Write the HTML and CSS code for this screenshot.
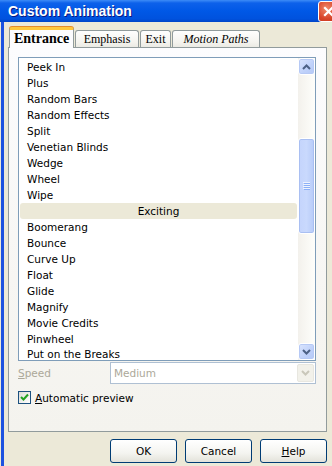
FILE: index.html
```html
<!DOCTYPE html>
<html lang="en">
<head>
  <meta charset="UTF-8">
  <title>Custom Animation</title>
  <link rel="stylesheet" href="styles.css">
</head>
<body>
  <div class="window">
    <div class="titlebar">
      <span class="title">Custom Animation</span>
      <span class="close">
        <svg width="13" height="13" viewBox="0 0 13 13"><path d="M3 3 L10 10 M10 3 L3 10" stroke="#fff" stroke-width="2.2" stroke-linecap="square"/></svg>
      </span>
    </div>

    <div class="client">
      <div class="tabs">
        <div class="tab active">Entrance</div>
        <div class="tab emphasis">Emphasis</div>
        <div class="tab exit">Exit</div>
        <div class="tab motion">Motion Paths</div>
      </div>

      <div class="pane">
        <div class="listbox">
          <div class="items">
            <div class="item">Peek In</div>
            <div class="item">Plus</div>
            <div class="item">Random Bars</div>
            <div class="item">Random Effects</div>
            <div class="item">Split</div>
            <div class="item">Venetian Blinds</div>
            <div class="item">Wedge</div>
            <div class="item">Wheel</div>
            <div class="item">Wipe</div>
            <div class="group">Exciting</div>
            <div class="item">Boomerang</div>
            <div class="item">Bounce</div>
            <div class="item">Curve Up</div>
            <div class="item">Float</div>
            <div class="item">Glide</div>
            <div class="item">Magnify</div>
            <div class="item">Movie Credits</div>
            <div class="item">Pinwheel</div>
            <div class="item last">Put on the Breaks</div>
          </div>
          <div class="scrollbar">
            <div class="sb-btn">
              <svg width="9" height="6" viewBox="0 0 9 6"><path d="M1 5 L4.5 1.5 L8 5" fill="none" stroke="#4d6185" stroke-width="2"/></svg>
            </div>
            <div class="sb-track">
              <div class="thumb">
                <svg width="7" height="8" viewBox="0 0 7 8"><path d="M0 0.5 H7 M0 2.5 H7 M0 4.5 H7 M0 6.5 H7" stroke="#eef3fe" stroke-width="1"/><path d="M1 1.5 H7 M1 3.5 H7 M1 5.5 H7 M1 7.5 H7" stroke="#8cb0f8" stroke-width="1"/></svg>
              </div>
            </div>
            <div class="sb-btn">
              <svg width="9" height="6" viewBox="0 0 9 6"><path d="M1 1 L4.5 4.5 L8 1" fill="none" stroke="#4d6185" stroke-width="2"/></svg>
            </div>
          </div>
        </div>

        <div class="speed-row">
          <span class="speed-label"><u>S</u>peed</span>
          <div class="combo">
            <span class="combo-text">Medium</span>
            <span class="combo-btn">
              <svg width="9" height="6" viewBox="0 0 9 6"><path d="M1 1 L4.5 4.5 L8 1" fill="none" stroke="#c9c7ba" stroke-width="2"/></svg>
            </span>
          </div>
        </div>

        <div class="check-row">
          <span class="checkbox">
            <svg width="11" height="11" viewBox="0 0 11 11"><path d="M2 5 L4.5 7.5 L9 2.5" fill="none" stroke="#21a121" stroke-width="2"/></svg>
          </span>
          <span class="check-label"><u>A</u>utomatic preview</span>
        </div>
      </div>

      <div class="buttons">
        <button class="btn">OK</button>
        <button class="btn">Cancel</button>
        <button class="btn"><u>H</u>elp</button>
      </div>
    </div>
  </div>
</body>
</html>
```

FILE: styles.css
```css
html, body {
  margin: 0;
  width: 332px;
  height: 466px;
  overflow: hidden;
}

body {
  background: #eef0f6;
  font-family: "DejaVu Sans", Tahoma, sans-serif;
  font-size: 10.5px;
  color: #000;
}

.window {
  width: 342px;
  height: 466px;
  background: #ece9d8;
}

.titlebar {
  height: 22px;
  display: flex;
  align-items: center;
  justify-content: space-between;
  background: linear-gradient(#3d8cf7 0, #0d61ea 3px, #0058e6 50%, #0052de 85%, #0045c8 100%);
}

.title {
  margin-left: 8px;
  color: #fff;
  font-family: "Liberation Sans", Arial, sans-serif;
  font-weight: bold;
  font-size: 14px;
  text-shadow: 1px 1px 0 #0a1883;
}

.close {
  width: 19px;
  height: 19px;
  margin-right: 3px;
  display: flex;
  align-items: center;
  justify-content: center;
  border: 1px solid #fff;
  border-radius: 3px;
  background: radial-gradient(circle at 40% 35%, #f08a6c, #d8452a 60%, #c43318);
}

.client {
  height: 444px;
  margin-left: 1px;
  border-left: 3px solid #1c52e0;
  padding: 5px 0 0 4px;
}

/* tabs */
.tabs {
  display: flex;
  align-items: flex-end;
  padding-left: 1px;
  height: 20px;
  font-family: "Liberation Serif", "Times New Roman", serif;
  font-size: 12px;
}

.tab {
  height: 17px;
  margin-left: 1px;
  box-sizing: border-box;
  border: 1px solid #919b9c;
  border-bottom: none;
  border-radius: 3px 3px 0 0;
  background: linear-gradient(#fefefe, #f4f3ee 70%, #ebeae4);
  text-align: center;
  line-height: 17px;
}

.tab.active {
  position: relative;
  z-index: 1;
  height: 21px;
  margin: 0 0 -1px 0;
  width: 65px;
  background: #fcfcfe;
  border-top: 3px solid #ffc83c;
  box-shadow: 0 -1px 0 #e68b2c;
  font-weight: bold;
  font-size: 14px;
  line-height: 17px;
}

.tab.emphasis { width: 64px; }
.tab.exit { width: 31px; }
.tab.motion { width: 88px; font-style: italic; }

/* pane */
.pane {
  width: 319px;
  height: 385px;
  box-sizing: border-box;
  border: 1px solid #919b9c;
  background: linear-gradient(#fcfcfe, #f7f6f3 60%, #f4f3ee);
  padding: 9px 0 0 9px;
}

.listbox {
  width: 298px;
  height: 304px;
  box-sizing: border-box;
  border: 1px solid #7f9db9;
  background: #fff;
  display: flex;
  overflow: hidden;
}

.items {
  width: 279px;
  padding-top: 1px;
  overflow: hidden;
}

.item {
  height: 16px;
  line-height: 16px;
  padding-left: 8px;
  white-space: nowrap;
}

.item.last {
  height: 13px;
  line-height: 14px;
}

.group {
  height: 16px;
  line-height: 16px;
  margin: 0 1px;
  border-radius: 3px;
  background: #ece9d8;
  text-align: center;
}

/* scrollbar */
.scrollbar {
  width: 17px;
  display: flex;
  flex-direction: column;
  background: linear-gradient(90deg, #f3f1ec, #fefefb);
}

.sb-btn {
  height: 17px;
  box-sizing: border-box;
  display: flex;
  align-items: center;
  justify-content: center;
  border: 1px solid #fff;
  border-radius: 3px;
  background: linear-gradient(135deg, #dbe5fd, #bfd1fa 60%, #b5c9f6);
  box-shadow: inset 0 0 0 1px #b6c9f5;
}

.sb-track {
  flex: 1;
  padding-top: 63px;
}

.thumb {
  height: 96px;
  box-sizing: border-box;
  border: 1px solid #fff;
  border-radius: 3px;
  background: linear-gradient(90deg, #c4d4fc, #c9d9fd 50%, #b7cbf8);
  box-shadow: inset 0 0 0 1px #a9bff2;
  display: flex;
  align-items: center;
  justify-content: center;
}

/* speed */
.speed-row {
  width: 298px;
  margin-top: 1px;
  display: flex;
  align-items: center;
  justify-content: space-between;
}

.speed-label {
  color: #aca899;
}

.combo {
  width: 206px;
  height: 22px;
  box-sizing: border-box;
  border: 1px solid #afc0d3;
  background: #fff;
  display: flex;
  align-items: center;
  justify-content: space-between;
}

.combo-text {
  color: #aca899;
  padding-left: 3px;
}

.combo-btn {
  width: 17px;
  height: 18px;
  margin-right: 1px;
  box-sizing: border-box;
  border: 1px solid #e8e7e0;
  border-radius: 2px;
  background: #f2f1ea;
  display: flex;
  align-items: center;
  justify-content: center;
}

/* checkbox */
.check-row {
  margin-top: 7px;
  display: flex;
  align-items: center;
  gap: 4px;
}

.checkbox {
  width: 13px;
  height: 13px;
  box-sizing: border-box;
  border: 1px solid #1c5180;
  background: linear-gradient(135deg, #dcdcd7, #fff);
  display: flex;
  align-items: center;
  justify-content: center;
}

/* buttons */
.buttons {
  width: 319px;
  margin-top: 7px;
  display: flex;
  justify-content: flex-end;
  gap: 8px;
}

.btn {
  width: 67px;
  height: 24px;
  border: 1px solid #003c74;
  border-radius: 3px;
  background: linear-gradient(#fff, #f4f4f0 60%, #e3e2da);
  font-family: "DejaVu Sans", Tahoma, sans-serif;
  font-size: 10.5px;
  color: #000;
  padding: 0;
}
```
